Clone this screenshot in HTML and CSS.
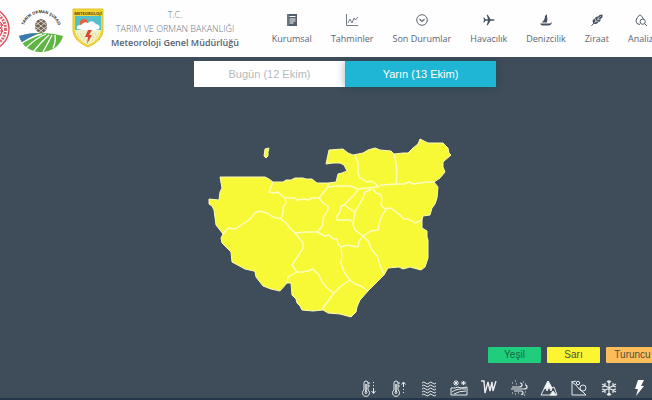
FILE: index.html
```html
<!DOCTYPE html>
<html lang="tr">
<head>
  <meta charset="UTF-8">
  <meta name="viewport" content="width=device-width, initial-scale=1">
  <title>Meteoroloji Genel Müdürlüğü</title>
  <link rel="stylesheet" href="styles.css">
</head>
<body>

  <header class="header">
    <div class="logos">
      <svg class="logo-ministry" viewBox="0 0 10 44" fill="none" stroke="#d8505c">
        <circle cx="-12" cy="22" r="21" stroke-width="1.4"/>
        <circle cx="-12" cy="22" r="17.500" stroke-width="3" stroke-dasharray="2 1" stroke="#df6671"/>
        <circle cx="-12" cy="22" r="14" stroke-width="1"/>
        <path d="M0 15l3 3-3 3 3 3-3 4M0 18h3M0 24h3"/>
      </svg>
      <svg class="logo-forum" viewBox="0 0 46 46">
        <defs><path id="arc" d="M5 24A18 18 0 0 1 41 24"/></defs>
        <text class="logo-arc-text"><textPath href="#arc" startOffset="50%" text-anchor="middle">TARIM ORMAN ŞURASI</textPath></text>
        <ellipse cx="23" cy="19" rx="6" ry="7" fill="#70604f"/>
        <path d="M18 15l10 8M17 19l9 7M20 12l8 6M28 15l-10 8M29 19l-9 7M26 12l-8 6" stroke="#fff" stroke-width=".7"/>
        <path d="M1 29C12 25 32 25 45 29C43 38 34 45 23 45C12 45 4 39 1 29Z" fill="#5fb544"/>
        <path d="M1 29Q10 26 20 26Q13 30 4 35Q2 32 1 29Z" fill="#3b79b5"/>
        <path d="M4 36Q15 29 24 27M8 41Q18 31 28 27M15 45Q23 35 31 28M25 45Q30 36 34 28M35 41Q38 35 37 28" fill="none" stroke="#fff" stroke-width="1.300"/>
      </svg>
      <svg class="logo-mgm" viewBox="0 0 32 40">
        <path d="M1 1H31V23Q30 33 16 39Q2 33 1 23Z" fill="#f2d52e" stroke="#dfc332"/>
        <path d="M3 8H29V22H3Z" fill="#54c0cc"/>
        <path d="M3 22H29Q28 32 16 37Q4 32 3 22Z" fill="#eef0c9"/>
        <path d="M5 26h22M6 29h20M8 32h16" stroke="#e5cf48" stroke-dasharray="1 2"/>
        <circle cx="12" cy="15" r="4" fill="#e8613c"/>
        <path d="M5 21Q4 17 9 17Q12 13 16 15Q20 11 24 16Q29 17 27 21Q21 24 5 21Z" fill="#fff"/>
        <path d="M16 22h4l-3 5h3l-5 9 1-7h-3Z" fill="#dc4939"/>
        <text class="logo-shield-text" x="16" y="6.500" text-anchor="middle">METEOROLOJİ</text>
      </svg>
    </div>

    <div class="brand">
      <span>T.C.</span>
      <span>TARIM VE ORMAN BAKANLIĞI</span>
      <strong>Meteoroloji Genel Müdürlüğü</strong>
    </div>

    <nav class="nav">
      <a href="#" class="nav-link">
        <svg viewBox="0 0 12 12"><path d="M1 0H11V12H1Z" fill="#535d6b"/><path d="M3.500 2.500h6M3.500 5h6M3.500 7h6M3.500 9h4" stroke="#fff"/><path d="M2 0v12" stroke="#aab0b8" stroke-width=".6"/></svg>
        Kurumsal
      </a>
      <a href="#" class="nav-link">
        <svg viewBox="0 0 12 12" fill="none" stroke="#727b87"><path d="M.5 0V11.500H12"/><path d="M2 9l2-4 2 4 2-5 1.500 2L12 3" /></svg>
        Tahminler
      </a>
      <a href="#" class="nav-link">
        <svg viewBox="0 0 12 12" fill="none" stroke="#5d6673"><circle cx="6" cy="6" r="5.300"/><path d="M3.500 5L6 7.500 8.500 5" stroke-width="1.200"/></svg>
        Son Durumlar
      </a>
      <a href="#" class="nav-link">
        <svg viewBox="0 0 12 12" fill="#465160"><path d="M12 6Q11.500 5.200 10 5.200H7.500L4.800 .7H3.700L5 5.200H2.500L1.200 3.500H.3L1 6 .3 8.500h.9L2.500 6.800H5L3.700 11.300h1.100L7.500 6.800H10Q11.500 6.800 12 6Z"/></svg>
        Havacılık
      </a>
      <a href="#" class="nav-link">
        <svg viewBox="0 0 12 12" fill="#465160"><path d="M7 0V8.500H1.500Q5 6 5 2Z"/><path d="M7.600 2.500Q8.500 5 7.600 8Z"/><path d="M0 9.500H9Q10.500 9.500 12 8Q11.500 11.500 8 11.500H2Q.8 11 0 9.500Z"/></svg>
        Denizcilik
      </a>
      <a href="#" class="nav-link">
        <svg viewBox="0 0 12 12"><path d="M2.500 9.500Q0 6 4 4.500Q4.500 2 7 2.500Q8 .5 11.500 .5Q12 4 9.500 5Q10 7.500 7.500 8Q6 11 2.500 9.500Z" fill="#465160"/><path d="M.5 11.800L10 2M4.500 4.500v3h3M7 2.500v3h2.500" fill="none" stroke="#fff" stroke-width=".5"/><path d="M.5 11.800L3 9" stroke="#465160"/></svg>
        Ziraat
      </a>
      <a href="#" class="nav-link">
        <svg viewBox="0 0 12 12" fill="none" stroke="#535d6b"><path d="M5 10.500Q1 10.500 1 6.800Q1 4 5 .7Q7.500 2.800 8.500 5"/><circle cx="7.700" cy="7.700" r="2.600"/><path d="M9.600 9.600L12 12"/></svg>
        Analiz
      </a>
    </nav>
  </header>

  <main class="content">
    <div class="tabs">
      <button type="button" class="tab">Bugün (12 Ekim)</button>
      <button type="button" class="tab active">Yarın (13 Ekim)</button>
    </div>

    <div class="map">
      <svg class="map-svg" viewBox="206 136 250 184" role="img" aria-label="Uyarı haritası">
        <path class="region" d="M220 177L265 177 269 179 273 182 283 182 286 180 291 180 295 178 303 178 306 179 312 179 317 183 328 183 336 182 338 174 342 173 347 171 344 165 340 163 333 163 326 164 329 150 343 149 348 153 353 155 363 153 368 150 375 148 380 150 391 151 394 154 403 153 408 153 413 148 418 144 420 139 428 143 443 143 448 148 449 153 451 155 443 162 443 167 445 172 440 178 434 182 438 187 437 198 435 204 432 208 430 215 423 216 422 220 422 228 427 231 427 237 428 240 428 258 425 267 421 270 410 267 403 269 399 267 388 268 384 275 368 291 360 300 357 307 356 312 351 317 340 314 328 313 323 310 313 311 302 310 300 306 297 303 296 299 292 295 291 283 287 283 280 291 271 289 263 286 256 277 255 272 254 271 245 269 232 262 231 252 222 243 221 238 223 234 216 225 214 210 212 206 209 204 209 199 219 200 220 192 222 188Z"/>
        <path class="region" d="M265 149L269 148 268 152 268 156 266 158 264 156Z"/>
        <g class="border">
          <path d="M273 182L269 192 274 193 278 192 281 195 285 198 286 203 283 208 283 212 281 219"/>
          <path d="M285 198L295 198 297 200 304 199 308 200 312 198 319 198 323 203 328 206 328 210 323 218 323 225 320 229 317 232 307 232 295 233"/>
          <path d="M319 198L328 187 328 183M328 187L338 186 350 186 358 189 378 187 381 185 397 184 404 184 409 182 414 184 420 183 427 182 434 182"/>
          <path d="M223 234L228 228 235 229 243 224 250 219 255 213 259 211 267 213 273 217 281 219 286 223 290 228 295 233 303 243 303 248 300 253 292 265 297 272 288 277 287 283"/>
          <path d="M317 232L325 236 329 235 333 239 337 239 338 244 341 247 342 255 341 263 344 272 350 280 355 284 361 286 368 291"/>
          <path d="M341 247L347 245 358 247 359 241 363 236 371 231 378 230 380 220 383 214 387 208"/>
          <path d="M363 236L355 230 353 225 355 212 363 198 365 192 372 189"/>
          <path d="M358 189L355 194 344 205 355 212M344 205L341 206 340 212 337 216 337 220 350 220 353 222"/>
          <path d="M355 155L358 163 358 173 360 178 367 182 371 181 376 184 378 187"/>
          <path d="M394 154L396 163 397 174 396 184"/>
          <path d="M373 189L376 193 380 194 382 198 381 205 385 209 391 208 400 215 404 219 408 219 415 223 422 220"/>
          <path d="M363 236L368 241 372 250 377 256 380 265 384 275"/>
          <path d="M297 272L302 272 308 271 313 269 319 275 322 282 328 289 334 293 341 286 350 280M334 293L322 309"/>
        </g>
      </svg>
    </div>

    <div class="legend">
      <span class="level green">Yeşil</span>
      <span class="level yellow">Sarı</span>
      <span class="level orange">Turuncu</span>
    </div>

    <div class="events">
      <button type="button" class="event" aria-label="Soğuk">
        <svg viewBox="0 0 18 18"><path d="M4 11V4a2 2 0 0 1 4 0v7a3.500 3.500 0 1 1-4 0ZM8 4h2M8 7h2"/><path d="M6 5v8" stroke-width="1.500"/><circle cx="6" cy="13.500" r="1"/><path d="M13.500 3v1M13.500 6v1M13.500 9v5M11.500 12l2 2.500 2-2.500"/></svg>
      </button>
      <button type="button" class="event" aria-label="Sıcak">
        <svg viewBox="0 0 18 18"><path d="M4 11V4a2 2 0 0 1 4 0v7a3.500 3.500 0 1 1-4 0ZM8 4h2M8 7h2"/><path d="M6 5v8" stroke-width="1.500"/><circle cx="6" cy="13.500" r="1"/><path d="M13.500 3v5M11.500 5.500l2-2.500 2 2.500M13.500 10v1M13.500 13v1"/></svg>
      </button>
      <button type="button" class="event" aria-label="Sis">
        <svg viewBox="0 0 18 18"><path d="M2 4q1.750-2 3.500 0t3.500 0 3.500 0 3.500 0M2 7q1.750-2 3.500 0t3.500 0 3.500 0 3.500 0M2 10q1.750-2 3.500 0t3.500 0 3.500 0 3.500 0M2 13q1.750-2 3.500 0t3.500 0 3.500 0 3.500 0M2 16q1.750-2 3.500 0t3.500 0 3.500 0 3.500 0"/></svg>
      </button>
      <button type="button" class="event" aria-label="Buzlanma">
        <svg viewBox="0 0 18 18"><path d="M3 4h6M6 1v6M4 2l4 4M8 2L4 6M11 4h5M13.500 2v4M12 2.500l3 3M15 2.500l-3 3M1 9h4l3-1 3 1 6-1v8H1ZM2 13q5-4 14-3M4 15q5-3 12-3"/></svg>
      </button>
      <button type="button" class="event" aria-label="Fırtına">
        <svg viewBox="0 0 18 18"><path d="M1 2H4L5 14 8 3 10 12 12 3 13 12 16 2" stroke-width="1.400"/></svg>
      </button>
      <button type="button" class="event" aria-label="Toz taşınımı">
        <svg viewBox="0 0 18 18"><path d="M2 8h7q3 0 3-2t-2-2M1 10h13q3 0 3-2t-2-2M4 12h7q2 0 2 2t-2 1" stroke-width="1.200"/><path d="M2 4h1M5 2h1M6 5h1M13 3h1M15 5h1M2 14h1M5 15h1M8 14h1M15 13h1M14 16h1" /></svg>
      </button>
      <button type="button" class="event" aria-label="Çığ">
        <svg viewBox="0 0 18 18"><path d="M1 16L8 2 12 9 14 8 17 16Z"/><path d="M8 2L4 10 6 9 7 12 9 8 11 12 12 9ZM10 16l3-4 3 4Z" fill="#f4f6f7"/></svg>
      </button>
      <button type="button" class="event" aria-label="Heyelan">
        <svg viewBox="0 0 18 18"><path d="M2 2V16H16L13 13 9 10 6 6 2 3M2 3l4-1"/><circle cx="13" cy="9" r="3"/><circle cx="8" cy="4" r="1.700"/></svg>
      </button>
      <button type="button" class="event" aria-label="Kar">
        <svg viewBox="0 0 18 18"><path d="M9 1v16M2 5l14 8M16 5L2 13M7 2l2 2 2-2M7 16l2-2 2 2M2 8l3-1V4M16 8l-3-1V4M2 10l3 1v3M16 10l-3 1v3" stroke-width="1.200"/></svg>
      </button>
      <button type="button" class="event" aria-label="Gök gürültülü sağanak">
        <svg viewBox="0 0 18 18"><path d="M8 1H14L11 7H14L6 17 8 10H5Z" fill="#fff" stroke="none"/></svg>
      </button>
    </div>
  </main>

</body>
</html>
```
FILE: styles.css
```css
* {
  box-sizing: border-box;
}

body {
  margin: 0;
  min-height: 100vh;
  display: flex;
  flex-direction: column;
  overflow-x: hidden;
  background: #3f4c59;
  font-family: "Open Sans", sans-serif;
}

.header {
  display: flex;
  align-items: flex-start;
  overflow: hidden;
  padding-bottom: 4px;
  background: #fefefe;
}

.logos {
  display: flex;
  flex-shrink: 0;
  align-items: flex-start;
  gap: 8px;
  padding-top: 7px;
}

.logos svg {
  display: block;
}

.logo-ministry {
  width: 10px;
  height: 44px;
}

.logo-forum {
  width: 46px;
  height: 46px;
}

.logo-mgm {
  width: 32px;
  height: 42px;
}

.logo-arc-text {
  font-size: 4px;
  font-weight: bold;
  fill: #333;
}

.logo-shield-text {
  font-size: 4px;
  font-weight: bold;
  fill: #4b4520;
}

.brand {
  display: flex;
  flex-direction: column;
  flex-shrink: 0;
  align-items: center;
  width: 142px;
  padding-top: 8px;
  font-size: 9px;
  line-height: 14px;
  font-weight: 300;
  color: #6d7480;
  white-space: nowrap;
}

.brand strong {
  font-weight: 600;
  color: #565f72;
}

.nav {
  display: flex;
  flex-shrink: 0;
  gap: 19px;
  margin-left: auto;
  margin-right: -1px;
  padding-top: 14px;
}

.nav-link {
  display: flex;
  flex-direction: column;
  align-items: center;
  gap: 6px;
  font-size: 9px;
  line-height: 14px;
  color: #5b6473;
  text-decoration: none;
  white-space: nowrap;
}

.nav-link svg {
  width: 12px;
  height: 12px;
}

.content {
  flex: 1;
  display: flex;
  flex-direction: column;
  overflow: hidden;
  border-bottom: 2px solid #26364a;
}

.tabs {
  display: flex;
  justify-content: center;
  padding: 4px 0 0 38px;
}

.tab {
  width: 151px;
  height: 26px;
  padding: 0;
  border: none;
  background: white;
  color: #b3b9bd;
  font-family: "Liberation Sans", sans-serif;
  font-size: 11px;
  cursor: pointer;
}

.tab.active {
  background: #1fb5d5;
  color: white;
  box-shadow: 0 0 8px rgba(0, 60, 80, 0.4);
}

.map {
  display: flex;
  justify-content: center;
  padding: 49px 0 0 10px;
}

.map-svg {
  width: 250px;
  height: 184px;
}

.region {
  fill: #f7f936;
  stroke: #fbfbb4;
  stroke-width: 1;
  stroke-linejoin: round;
}

.border {
  fill: none;
  stroke: #fdfdc4;
  stroke-width: 1.4;
  stroke-linejoin: round;
}

.legend {
  display: flex;
  justify-content: flex-end;
  gap: 6px;
  margin: auto -7px 0 0;
  font-family: "Liberation Sans", sans-serif;
  font-size: 10px;
}

.level {
  width: 53px;
  border-radius: 1px;
  line-height: 16px;
  text-align: center;
  color: #4d5238;
}

.green {
  background: #20cd7c;
  color: #17693f;
}

.yellow {
  background: #fbf532;
}

.orange {
  background: #fdbd5a;
}

.events {
  display: flex;
  justify-content: flex-end;
  gap: 12px;
  padding: 16px 4px 1px 0;
}

.event {
  width: 18px;
  height: 18px;
  padding: 0;
  border: none;
  background: none;
  cursor: pointer;
}

.event svg {
  display: block;
  width: 18px;
  height: 18px;
  fill: none;
  stroke: #e8ebed;
  stroke-width: 1;
}
```
